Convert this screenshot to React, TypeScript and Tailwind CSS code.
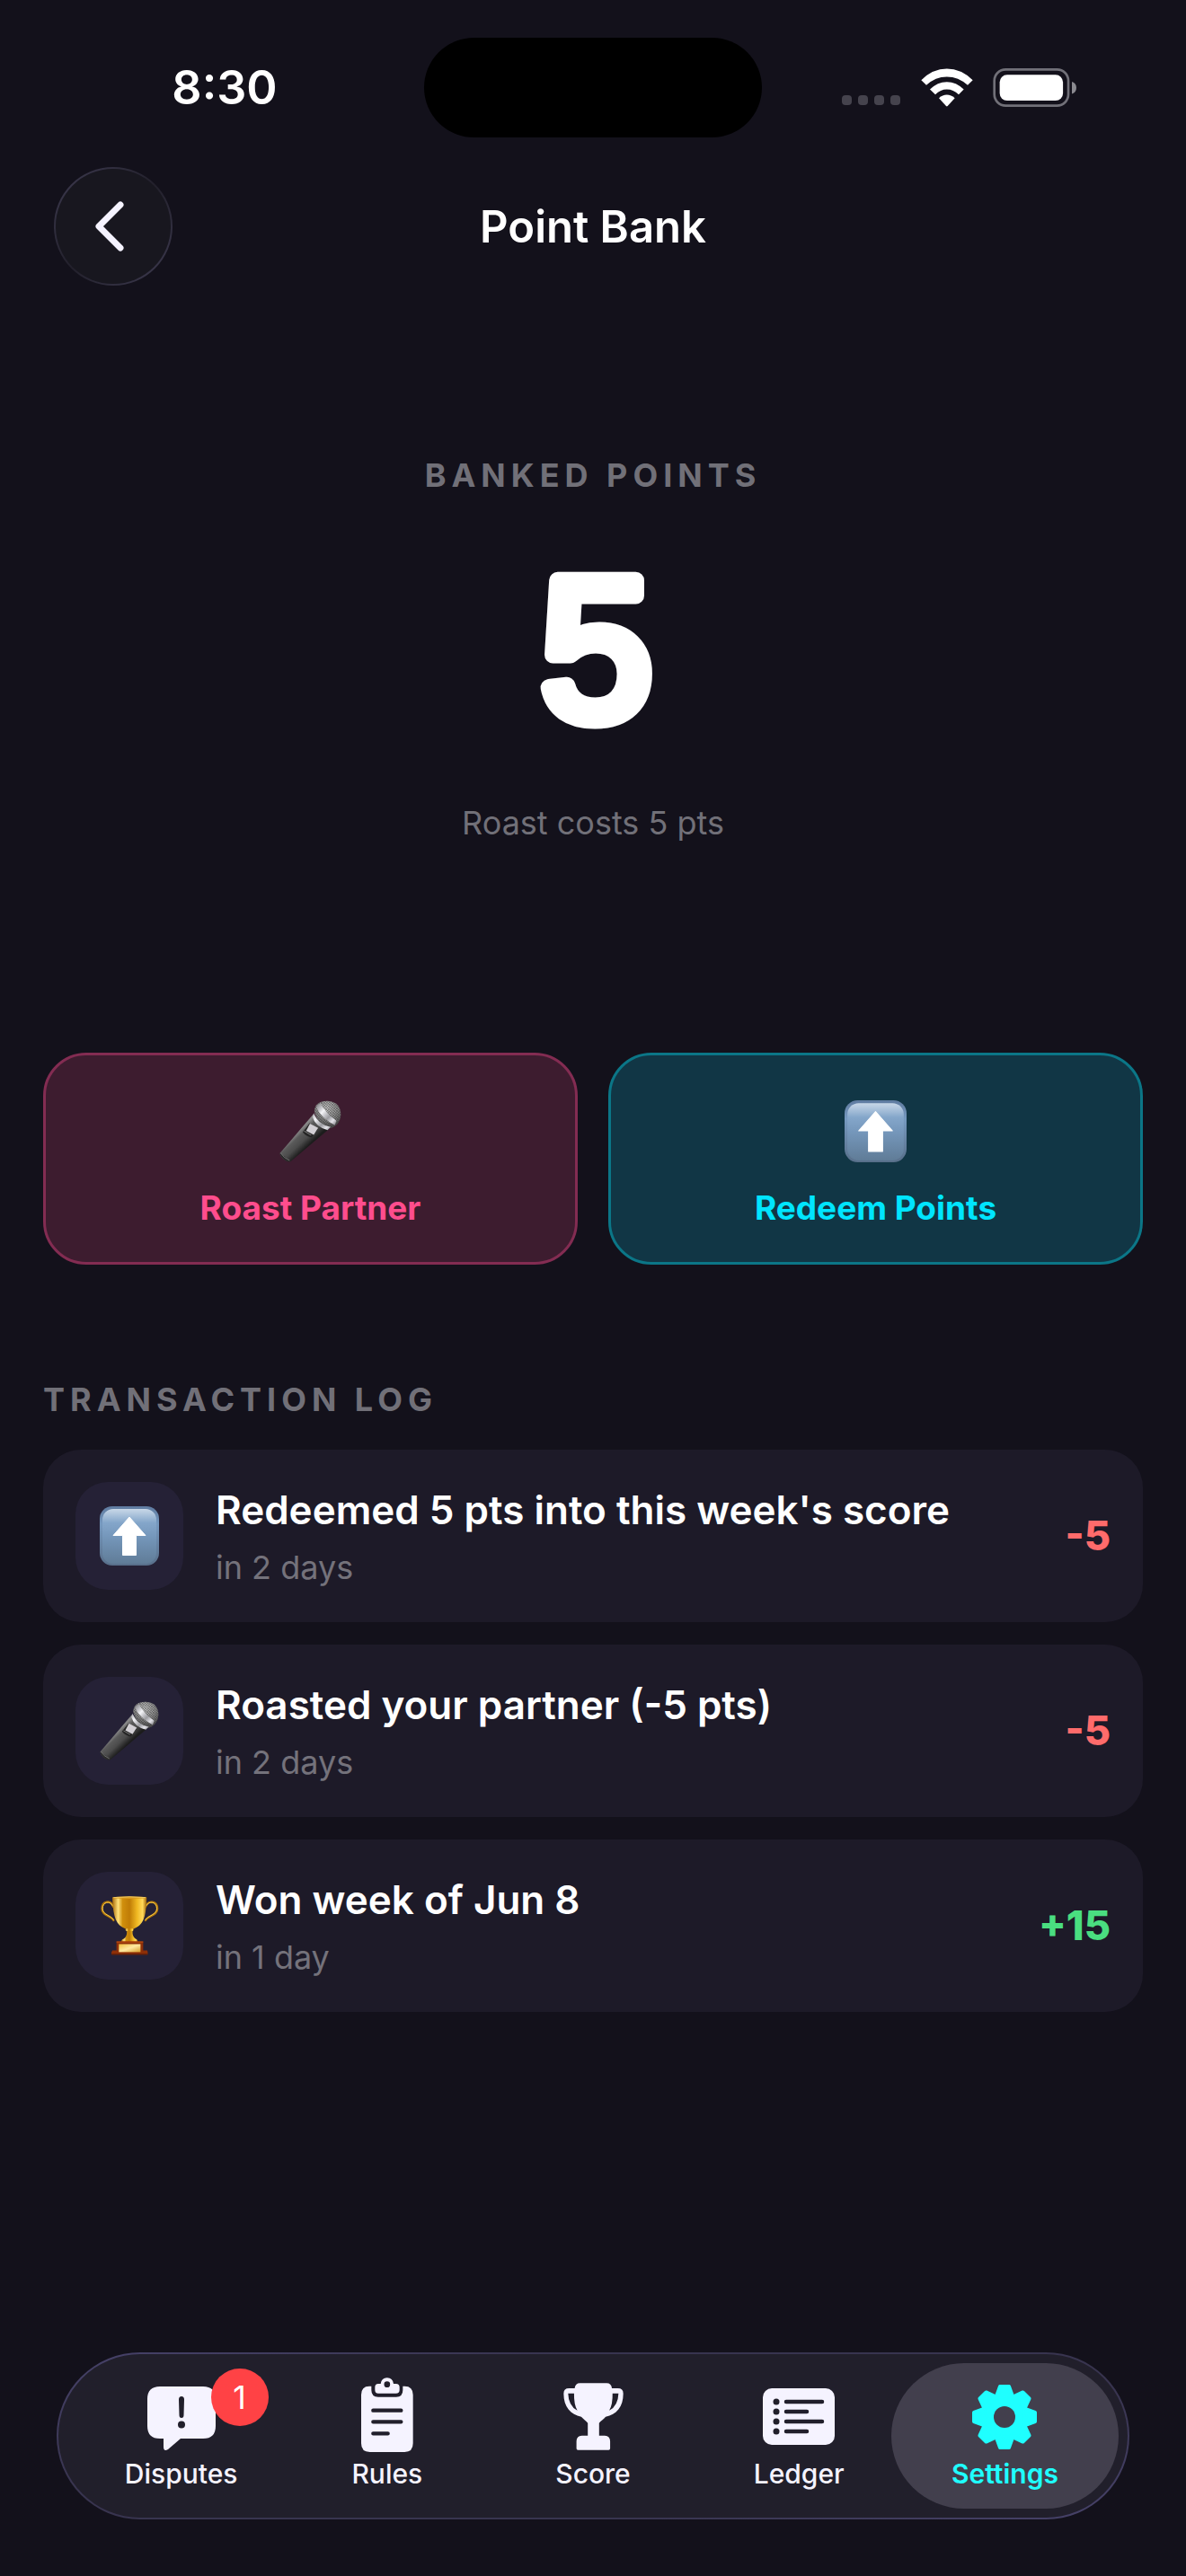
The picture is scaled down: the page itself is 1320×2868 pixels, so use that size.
import React, { useId } from "react";

function WifiIcon() {
  return (
    <svg viewBox="314 44 174 128" className="h-[43px] w-[58px] fill-white" aria-hidden="true">
      <path d="M315 83Q353 45 400.500 45T487 83L470 100Q439 72 400.500 72T332 100Z" />
      <path d="M344 114Q369 89 400.500 89T457 114L440 131Q422 114 400.500 114T362 131Z" />
      <path d="M374 143Q386 132 400.500 132T427 143L403 169.500Q400.500 172 398 169.500Z" />
    </svg>
  );
}

function BatteryIcon() {
  return (
    <svg viewBox="554 44 282 130" className="h-[43px] w-[94px]" aria-hidden="true">
      <rect x="558" y="48" width="249" height="122" rx="38" fill="none" stroke="#717078" strokeWidth="8" />
      <rect x="576" y="66" width="213" height="87" rx="25" fill="#fff" />
      <path d="M819 89Q834 94 834 109.500T819 130Z" fill="#8b8a90" />
    </svg>
  );
}

function MicEmoji({ className }: { className: string }) {
  const id = useId();
  return (
    <svg viewBox="93 105 197 197" className={className} aria-hidden="true">
      <defs>
        <linearGradient id={id + "b"} gradientUnits="userSpaceOnUse" x1="148" y1="208" x2="186" y2="248">
          <stop offset="0" stopColor="#8a8a8a" />
          <stop offset="0.250" stopColor="#5a5a5a" />
          <stop offset="0.600" stopColor="#4b4b4b" />
          <stop offset="1" stopColor="#1c1c1c" />
        </linearGradient>
        <linearGradient id={id + "r"} gradientUnits="userSpaceOnUse" x1="205" y1="130" x2="268" y2="190">
          <stop offset="0" stopColor="#8d8d92" />
          <stop offset="0.300" stopColor="#f4f4f8" />
          <stop offset="0.600" stopColor="#9b9ba0" />
          <stop offset="0.800" stopColor="#e4e4ea" />
          <stop offset="1" stopColor="#77777c" />
        </linearGradient>
        <radialGradient id={id + "h"} gradientUnits="userSpaceOnUse" cx="244" cy="128" r="62">
          <stop offset="0" stopColor="#c9c9c9" />
          <stop offset="0.600" stopColor="#8c8c8c" />
          <stop offset="1" stopColor="#4d4d4d" />
        </radialGradient>
        <pattern id={id + "m"} width="6" height="6" patternUnits="userSpaceOnUse" patternTransform="rotate(40)">
          <path d="M0 0H6M0 0V6" stroke="#333" strokeWidth="2.500" />
        </pattern>
      </defs>
      <path d="M200 150L250 197L129 299Q119 303 106 292Q94 281 95 273Z" fill={`url(#${id}b)`} />
      <path d="M95 273L129 299Q119 303 106 292Q94 281 95 273Z" fill="#2a2a2a" />
      <path d="M97 273Q106 288 125 296" fill="none" stroke="#8a8a8a" strokeWidth="2" />
      <path d="M204 140Q206 107 246 107Q288 110 288 152Q285 184 256 194Q216 184 204 140Z" fill={`url(#${id}h)`} />
      <path d="M204 140Q206 107 246 107Q288 110 288 152Q285 184 256 194Q216 184 204 140Z" fill={`url(#${id}m)`} opacity="0.700" />
      <path d="M213 121L224 116Q240 146 274 170L269 184Q226 162 210 127Z" fill={`url(#${id}r)`} />
      <path d="M198 158L202 146Q214 182 256 190L246 200Q208 190 198 158Z" fill={`url(#${id}r)`} />
      <path d="M189 178L215 198L196 223Q178 220 167 206Z" fill="#242424" />
      <path d="M190 179L216 193L202 215L178 202Z" fill="#d2cfd4" />
      <path d="M172 203L194 216" stroke="#777" strokeWidth="3" />
    </svg>
  );
}

function ArrowEmoji({ className }: { className: string }) {
  const id = useId();
  return (
    <svg viewBox="0 0 66 66" className={className} aria-hidden="true">
      <defs>
        <linearGradient id={id + "a"} x1="0" y1="0" x2="0" y2="1">
          <stop offset="0" stopColor="#5f7ba0" />
          <stop offset="0.300" stopColor="#7699bf" />
          <stop offset="1" stopColor="#586f8a" />
        </linearGradient>
        <linearGradient id={id + "g"} x1="0" y1="0" x2="0" y2="1">
          <stop offset="0" stopColor="#c9d8e8" />
          <stop offset="0.250" stopColor="#84a6ca" />
          <stop offset="0.500" stopColor="#7597bb" />
          <stop offset="1" stopColor="#607c97" />
        </linearGradient>
      </defs>
      <rect width="66" height="66" rx="14" fill={`url(#${id}a)`} />
      <rect x="3" y="3" width="60" height="61" rx="12" fill={`url(#${id}g)`} />
      <path d="M33 12L51 32.500H40.500V54.500H25.500V32.500H15Z" fill="#fff" stroke="#fff" strokeLinejoin="round" />
    </svg>
  );
}

function TrophyEmoji({ className }: { className: string }) {
  const id = useId();
  return (
    <svg viewBox="93 752 197 200" className={className} aria-hidden="true">
      <defs>
        <linearGradient id={id + "c"} x1="0" y1="0" x2="1" y2="0">
          <stop offset="0" stopColor="#a86a08" />
          <stop offset="0.170" stopColor="#ffe27a" />
          <stop offset="0.300" stopColor="#d08f0c" />
          <stop offset="0.500" stopColor="#c07c06" />
          <stop offset="0.720" stopColor="#f0b923" />
          <stop offset="0.880" stopColor="#ffd95a" />
          <stop offset="1" stopColor="#9a5f05" />
        </linearGradient>
        <linearGradient id={id + "p"} x1="0" y1="0" x2="1" y2="1">
          <stop offset="0" stopColor="#f0c040" />
          <stop offset="0.500" stopColor="#ffe9a0" />
          <stop offset="1" stopColor="#d8a02a" />
        </linearGradient>
      </defs>
      <g fill="none" strokeLinecap="round">
        <path d="M137 788C128 762 99 770 99 795C99 818 130 818 138 834" stroke="#b0760c" strokeWidth="7" />
        <path d="M246 788C256 762 286 770 286 795C286 818 254 818 246 834" stroke="#b0760c" strokeWidth="7" />
        <path d="M135 785C126 765 101 772 101 794C101 816 130 817 138 832" stroke="#f5cc4c" strokeWidth="3" />
        <path d="M248 785C258 765 284 772 284 794C284 816 254 817 246 832" stroke="#f5cc4c" strokeWidth="3" />
      </g>
      <path d="M134 757H250C248 800 246 842 216 857Q205 862 203 866H182Q180 862 168 857C140 842 136 800 134 757Z" fill={`url(#${id}c)`} />
      <ellipse cx="192" cy="757" rx="58" ry="4" fill="#d99a1c" />
      <path d="M138 757Q192 752 246 757" stroke="#ffe488" strokeWidth="2" fill="none" />
      <rect x="178" y="862" width="28" height="8" rx="4" fill={`url(#${id}c)`} />
      <path d="M183 870H202Q201 888 212 896Q220 898 220 908H164Q164 898 173 896Q184 888 183 870Z" fill={`url(#${id}c)`} />
      <path d="M148 905H238V935H252Q255 944 253 950H132Q129 942 134 935H148Z" fill="#8d2f08" />
      <path d="M148 905H238V909H148Z" fill="#b5490f" />
      <path d="M132 946H253V950H132Z" fill="#6a2005" />
      <rect x="156" y="914" width="73" height="27" fill={`url(#${id}p)`} />
    </svg>
  );
}

function DisputesIcon() {
  return (
    <svg viewBox="0 -4 76 76" className="h-[76px] w-[76px]" aria-hidden="true">
      <path d="M14 0H62Q76 0 76 14V44Q76 58 62 58H37L23 70Q18 73 18 67V58H14Q0 58 0 44V14Q0 0 14 0Z" fill="currentColor" />
      <path d="M35 14.500Q35 11 38 11T41 14.500L40.500 32Q40.500 35 38 35T35.500 32Z" fill="#211f2b" />
      <circle cx="38" cy="42.500" r="4" fill="#211f2b" />
    </svg>
  );
}

function RulesIcon() {
  return (
    <svg viewBox="69 36 174 261" className="h-[87px] w-[58px] shrink-0" aria-hidden="true">
      <path d="M96 65H103V78Q103 101 126 101H186Q208 101 208 78V65H214Q242 65 242 94V256Q242 285 214 285H98Q69 285 69 256V94Q69 65 96 65Z" fill="currentColor" />
      <path fillRule="evenodd" d="M134 57Q137 37 155.500 37T177 57H185Q197 58 197 68V78Q197 89 185 89H126Q115 89 115 78V68Q115 58 126 57ZM155.500 49A10 10 0 1 0 155.500 69A10 10 0 1 0 155.500 49Z" fill="currentColor" />
      <path d="M109 146H202M109 184H202M109 223H158" stroke="#211f2b" strokeWidth="13" strokeLinecap="round" />
    </svg>
  );
}

function ScoreIcon() {
  return (
    <svg viewBox="737 54 202 226" className="h-[75px] w-[67px]" aria-hidden="true">
      <path d="M775 72Q777 55 793 55H882Q898 55 900 72H920Q938 72 938 90C938 135 915 160 879 168C872 177 862 182 857 189V231H876Q894 232 894 250V274Q894 279 889 279H786Q781 279 781 274V250Q781 232 799 231H819V189C813 182 806 177 797 168C762 160 738 135 738 90Q738 72 756 72Z" fill="currentColor" />
      <path d="M753 89H773Q772 125 784 147Q754 130 753 89Z" fill="#211f2b" />
      <path d="M922 89H902Q903 125 891 147Q921 130 922 89Z" fill="#211f2b" />
    </svg>
  );
}

function LedgerIcon() {
  return (
    <svg viewBox="0 0 80 63" className="h-[63px] w-[80px]" aria-hidden="true">
      <rect width="80" height="63" rx="10" fill="currentColor" />
      <g fill="#211f2b">
        <circle cx="15" cy="15" r="3.500" />
        <circle cx="15" cy="26" r="3.500" />
        <circle cx="15" cy="37" r="3.500" />
        <circle cx="15" cy="48" r="3.500" />
      </g>
      <path d="M26 15H66M26 26H49M26 37H66M26 48H49" stroke="#211f2b" strokeWidth="4.500" strokeLinecap="round" />
    </svg>
  );
}

function SettingsIcon() {
  return (
    <svg viewBox="-36 -36 72 72" className="size-[72px]" aria-hidden="true">
      <g fill="currentColor" stroke="currentColor" strokeWidth="4" strokeLinejoin="round">
        <circle r="23" />
        {[0, 45, 90, 135, 180, 225, 270, 315].map((angle) => (
          <path key={angle} d="M-9 -23L-5 -34H5L9 -23Z" transform={`rotate(${angle})`} />
        ))}
      </g>
      <circle r="12" fill="#423f4d" />
    </svg>
  );
}

const transactions = [
  { icon: ArrowEmoji, title: "Redeemed 5 pts into this week's score", when: "in 2 days", amount: "-5", color: "text-[#ff6b6b]" },
  { icon: MicEmoji, title: "Roasted your partner (-5 pts)", when: "in 2 days", amount: "-5", color: "text-[#ff6b6b]" },
  { icon: TrophyEmoji, title: "Won week of Jun 8", when: "in 1 day", amount: "+15", color: "text-[#4ade80]" },
];

const tabs = [
  { label: "Disputes", icon: DisputesIcon, badge: "1", active: false },
  { label: "Rules", icon: RulesIcon, badge: "", active: false },
  { label: "Score", icon: ScoreIcon, badge: "", active: false },
  { label: "Ledger", icon: LedgerIcon, badge: "", active: false },
  { label: "Settings", icon: SettingsIcon, badge: "", active: true },
];

export default function App() {
  return (
    <div className="flex min-h-screen flex-col bg-[#13111b] font-['Inter',sans-serif] text-white">
      <div className="grid h-[186px] grid-cols-[1fr_376px_1fr] pt-[42px]">
        <div className="flex h-[111px] items-center justify-center pl-7 text-[52px] font-semibold leading-none">8:30</div>
        <div className="h-[111px] rounded-full bg-black" />
        <div className="flex h-[111px] items-center justify-center pr-8">
          <div className="mt-7 flex gap-[7px]">
            {[0, 1, 2, 3].map((dot) => (
              <span key={dot} className="size-[11px] rounded bg-[#45434d]" />
            ))}
          </div>
          <div className="ml-[23px] mr-[22px]">
            <WifiIcon />
          </div>
          <BatteryIcon />
        </div>
      </div>

      <header className="grid grid-cols-[1fr_auto_1fr] items-center px-[60px]">
        <button
          type="button"
          aria-label="Back"
          className="size-[132px] rounded-full bg-[linear-gradient(135deg,#3f3c52,#22202b_50%,#3f3c52)] p-[2px]"
        >
          <span className="flex size-full items-center justify-center rounded-full bg-[#18171f] pr-2">
            <svg viewBox="0 0 34 58" className="h-[58px] w-[34px]" fill="none" stroke="#f5f3ff" strokeWidth="7" strokeLinecap="round" strokeLinejoin="round" aria-hidden="true">
              <path d="M29 5L5 29L29 53" />
            </svg>
          </span>
        </button>
        <h1 className="text-[49px] font-semibold leading-none">Point Bank</h1>
      </header>

      <main className="flex flex-col px-12 pt-[189px]">
        <section className="flex flex-col items-center">
          <h2 className="text-[36px] font-bold leading-[44px] tracking-[6px] text-[#717078]">BANKED POINTS</h2>
          <svg viewBox="0 0 180 174" className="mt-[87px] h-[174px] w-[180px] overflow-visible" role="img" aria-label="5">
            <text
              x="94"
              y="162"
              textAnchor="middle"
              fill="#fff"
              stroke="#fff"
              strokeWidth="19"
              strokeLinejoin="round"
              className="font-['Liberation_Sans',sans-serif] text-[222px] font-normal"
            >
              5
            </text>
          </svg>
          <p className="mt-[82px] text-[36px] leading-[44px] text-[#717078]">Roast costs 5 pts</p>
        </section>

        <section className="mt-[234px] grid grid-cols-2 gap-[34px]">
          <button type="button" className="flex h-[236px] flex-col items-center rounded-[48px] border-[3px] border-[#832c52] bg-[#3d1c2f] pt-[50px]">
            <MicEmoji className="size-[69px]" />
            <span className="mt-[29px] text-[37px] font-bold leading-[44px] text-[#ff4d8d]">Roast Partner</span>
          </button>
          <button type="button" className="flex h-[236px] flex-col items-center rounded-[48px] border-[3px] border-[#0b7687] bg-[#113645] pt-[50px]">
            <ArrowEmoji className="size-[69px]" />
            <span className="mt-[29px] text-[37px] font-bold leading-[44px] text-[#00e5ff]">Redeem Points</span>
          </button>
        </section>

        <section className="mt-[128px]">
          <h2 className="text-[36px] font-bold leading-[44px] tracking-[6px] text-[#717078]">TRANSACTION LOG</h2>
          <ul className="mt-[34px] flex flex-col gap-[25px]">
            {transactions.map(({ icon: Icon, title, when, amount, color }) => (
              <li key={title} className="flex items-center gap-9 rounded-[42px] bg-[#1d1a28] p-9">
                <div className="flex size-[120px] shrink-0 items-center justify-center rounded-[36px] bg-[#252136]">
                  <Icon className="size-[66px]" />
                </div>
                <div className="min-w-0 flex-1">
                  <p className="text-[44px] font-semibold leading-[56px]">{title}</p>
                  <p className="mt-[14px] text-[36px] leading-[44px] text-[#74727b]">{when}</p>
                </div>
                <p className={`text-[45px] font-extrabold leading-[56px] ${color}`}>{amount}</p>
              </li>
            ))}
          </ul>
        </section>
      </main>

      <div className="mt-auto px-[63px] pb-[63px] pt-12">
        <nav className="rounded-full bg-[linear-gradient(165deg,#47426a,#38344f_30%,#38344f_70%,#47426a)] p-[2px]">
          <div className="flex h-[182px] rounded-full bg-[#211f2b] px-[22px] py-[10px]">
            {tabs.map(({ label, icon: Icon, badge, active }) => (
              <a
                key={label}
                href={"#" + label.toLowerCase()}
                aria-current={active ? "page" : undefined}
                className={`-mx-3 flex min-w-0 flex-1 flex-col items-center rounded-full pt-[18px] ${active ? "bg-[#423f4d] font-semibold text-[#1fffff]" : "font-medium text-[#f5f3ff]"}`}
              >
                <span className="relative flex h-[83px] items-center justify-center">
                  <Icon />
                  {badge && (
                    <span className="absolute -right-[59px] -top-[12px] flex size-[64px] items-center justify-center rounded-full bg-[#ff4245] text-[36px] font-normal leading-none text-white">
                      {badge}
                    </span>
                  )}
                </span>
                <span className="mt-1 text-[30px] leading-9">{label}</span>
              </a>
            ))}
          </div>
        </nav>
      </div>
    </div>
  );
}
